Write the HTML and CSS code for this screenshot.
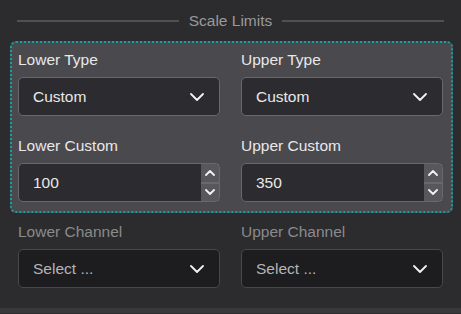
FILE: index.html
```html
<!DOCTYPE html>
<html lang="en">
<head>
	<meta charset="UTF-8">
	<title>Scale Limits</title>
	<link rel="stylesheet" href="styles.css">
</head>
<body>
	<div class="header">
		<span class="line"></span>
		<span class="title">Scale Limits</span>
		<span class="line"></span>
	</div>

	<div class="panel">
		<div class="field">
			<div class="label">Lower Type</div>
			<div class="select">
				<span>Custom</span>
				<svg class="chev" width="14" height="8" viewBox="0 0 14 8"><polyline points="1,1 7,7 13,1" /></svg>
			</div>
		</div>
		<div class="field">
			<div class="label">Upper Type</div>
			<div class="select">
				<span>Custom</span>
				<svg class="chev" width="14" height="8" viewBox="0 0 14 8"><polyline points="1,1 7,7 13,1" /></svg>
			</div>
		</div>
		<div class="field">
			<div class="label">Lower Custom</div>
			<div class="number">
				<span class="value">100</span>
				<div class="spin">
					<div class="spin-btn"><svg width="10" height="6" viewBox="0 0 10 6"><polyline points="1,5 5,1 9,5" /></svg></div>
					<div class="spin-btn"><svg width="10" height="6" viewBox="0 0 10 6"><polyline points="1,1 5,5 9,1" /></svg></div>
				</div>
			</div>
		</div>
		<div class="field">
			<div class="label">Upper Custom</div>
			<div class="number">
				<span class="value">350</span>
				<div class="spin">
					<div class="spin-btn"><svg width="10" height="6" viewBox="0 0 10 6"><polyline points="1,5 5,1 9,5" /></svg></div>
					<div class="spin-btn"><svg width="10" height="6" viewBox="0 0 10 6"><polyline points="1,1 5,5 9,1" /></svg></div>
				</div>
			</div>
		</div>
	</div>

	<div class="channels">
		<div class="field">
			<div class="label">Lower Channel</div>
			<div class="select">
				<span>Select ...</span>
				<svg class="chev" width="14" height="8" viewBox="0 0 14 8"><polyline points="1,1 7,7 13,1" /></svg>
			</div>
		</div>
		<div class="field">
			<div class="label">Upper Channel</div>
			<div class="select">
				<span>Select ...</span>
				<svg class="chev" width="14" height="8" viewBox="0 0 14 8"><polyline points="1,1 7,7 13,1" /></svg>
			</div>
		</div>
	</div>

	<div class="bottom"></div>
</body>
</html>
```

FILE: styles.css
```css
* {
    margin: 0;
    padding: 0;
    box-sizing: border-box;
}

body {
    width: 461px;
    height: 314px;
    overflow: hidden;
    background: #2c2c2e;
    font-family: "Liberation Sans", Arial, sans-serif;
    font-size: 15.5px;
    color: #e8e8e8;
}

.header {
    display: flex;
    align-items: center;
    height: 41px;
    padding: 0 17px;
}

.header .line {
    flex: 1;
    height: 2px;
    background: #505053;
}

.header .title {
    margin: 0 10px;
    color: #9a9a9c;
    line-height: 20px;
}

.panel {
    display: grid;
    grid-template-columns: 1fr 1fr;
    column-gap: 21px;
    row-gap: 20px;
    width: 443px;
    margin-left: 10px;
    padding: 7px 8px 9px 6px;
    border: 2px dotted #12a0a2;
    border-radius: 6px;
    background: #4a494e;
}

.label {
    line-height: 20px;
    margin-bottom: 7px;
}

.select,
.number {
    display: flex;
    align-items: center;
    height: 39px;
    border: 1px solid #69686d;
    border-radius: 5px;
    background: #2c2c30;
}

.select {
    justify-content: space-between;
    padding: 0 15px 0 14px;
}

.chev polyline,
.spin polyline {
    fill: none;
    stroke: #f2f2f2;
    stroke-width: 1.8;
    stroke-linecap: round;
    stroke-linejoin: round;
}

.number .value {
    flex: 1;
    padding-left: 14px;
}

.spin {
    display: flex;
    flex-direction: column;
    gap: 2px;
    align-self: stretch;
    width: 18px;
    background: #69686d;
}

.spin-btn {
    flex: 1;
    display: flex;
    align-items: center;
    justify-content: center;
    background: #58575c;
}

.spin-btn:first-child {
    border-top-right-radius: 4px;
}

.spin-btn:last-child {
    border-bottom-right-radius: 4px;
}

.channels {
    display: grid;
    grid-template-columns: 1fr 1fr;
    column-gap: 21px;
    width: 443px;
    padding: 9px 0 0 18px;
}

.channels .label {
    color: #8a8a8c;
}

.channels .select {
    border-color: #48484b;
    background: #1d1d1f;
    color: #b5b5b7;
}

.bottom {
    height: 5px;
    margin-top: 20px;
    background: #39393b;
}
```
